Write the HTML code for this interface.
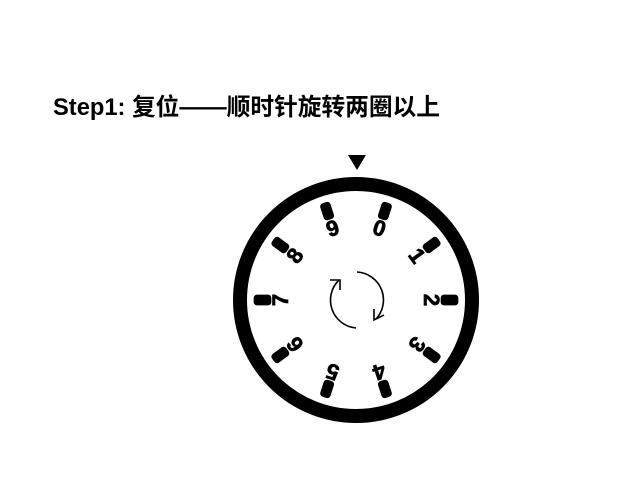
<!DOCTYPE html>
<html><head><meta charset="utf-8"><style>
body{margin:0;width:640px;height:480px;background:#fff;overflow:hidden;position:relative}
h1{position:absolute;left:53px;top:88px;margin:0;font:bold 23.7px "Liberation Sans","Noto Sans CJK SC",sans-serif;color:#000;white-space:nowrap}
svg{position:absolute;left:0;top:0}
</style></head><body>
<h1>Step1: 复位——顺时针旋转两圈以上</h1>
<svg width="640" height="480" viewBox="0 0 640 480">
<polygon points="348,155 366,155 357,170" fill="#000"/>
<circle cx="356" cy="300" r="116" fill="none" stroke="#000" stroke-width="14"/>
<g fill="#000" stroke="#000" stroke-width="0.7" font-family="Liberation Sans,sans-serif" font-weight="bold" font-size="22" text-anchor="middle">
<g transform="rotate(18 356 300)"><rect x="351" y="198" width="10" height="17" rx="3"/><text x="356" y="232">0</text></g>
<g transform="rotate(54 356 300)"><rect x="351" y="198" width="10" height="17" rx="3"/><text x="356" y="232">1</text></g>
<g transform="rotate(90 356 300)"><rect x="351" y="198" width="10" height="17" rx="3"/><text x="356" y="232">2</text></g>
<g transform="rotate(126 356 300)"><rect x="351" y="198" width="10" height="17" rx="3"/><text x="356" y="232">3</text></g>
<g transform="rotate(162 356 300)"><rect x="351" y="198" width="10" height="17" rx="3"/><text x="356" y="232">4</text></g>
<g transform="rotate(198 356 300)"><rect x="351" y="198" width="10" height="17" rx="3"/><text x="356" y="232">5</text></g>
<g transform="rotate(234 356 300)"><rect x="351" y="198" width="10" height="17" rx="3"/><text x="356" y="232">6</text></g>
<g transform="rotate(270 356 300)"><rect x="351" y="198" width="10" height="17" rx="3"/><text x="356" y="232">7</text></g>
<g transform="rotate(306 356 300)"><rect x="351" y="198" width="10" height="17" rx="3"/><text x="356" y="232">8</text></g>
<g transform="rotate(342 356 300)"><rect x="351" y="198" width="10" height="17" rx="3"/><text x="356" y="232">9</text></g>
</g>
<g fill="none" stroke="#000" stroke-width="1.6">
<path d="M357 272 A28 28 0 0 1 376 319"/>
<path d="M374 309 L374 320 L384 315"/>
<path d="M356 328 A28 28 0 0 1 339 280"/>
<path d="M330 280 L340 280 L340 290"/>
</g>
</svg>
</body></html>
